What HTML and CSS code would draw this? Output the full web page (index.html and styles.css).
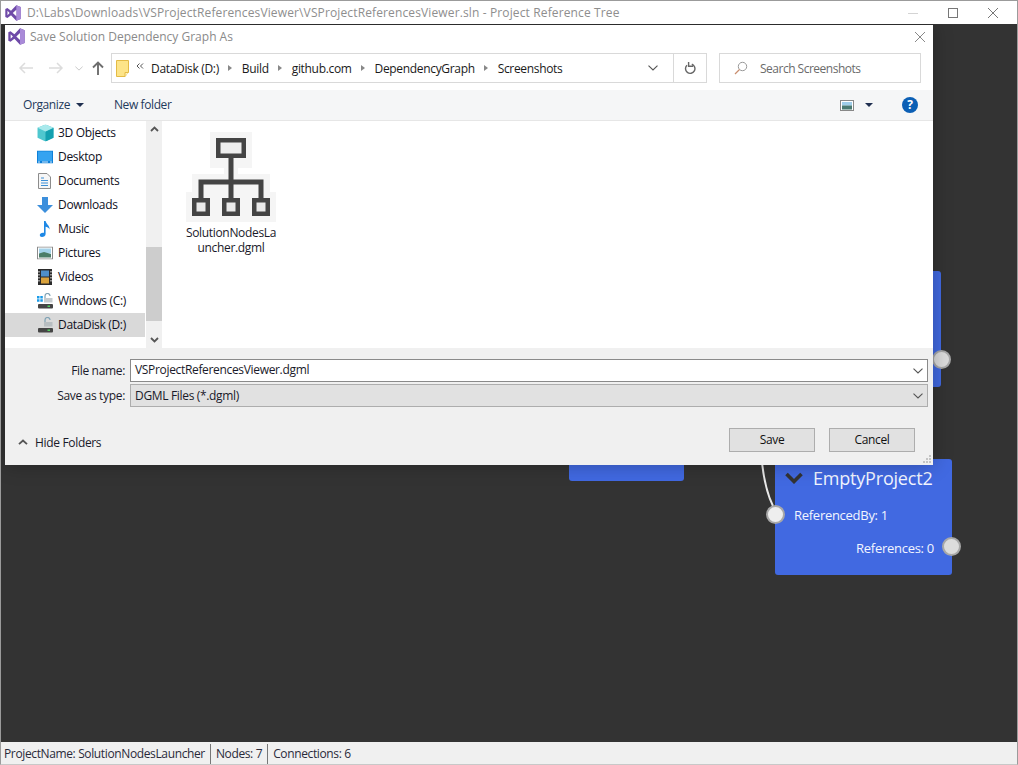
FILE: index.html
```html
<!DOCTYPE html>
<html lang="en">
<head>
<meta charset="utf-8">
<title>Project Reference Tree</title>
<link rel="stylesheet" href="styles.css">
</head>
<body>
<svg class="defs" width="0" height="0" aria-hidden="true">
  <defs>
    <symbol id="vs" viewBox="0 0 16 16">
      <path d="M11.3 0.3 L15.7 2 V14 L11.3 15.7 L6 10.2 L2.4 13 L0.3 11.9 V4.1 L2.4 3 L6 5.8 Z" fill="#6f4aa8"/>
      <path d="M11.3 0.3 L15.7 2 V14 L11.3 15.7 Z" fill="#a98ad8"/>
      <path d="M11.3 4.8 L7.8 8 L11.3 11.2 Z M2.5 5.8 V10.2 L4.6 8 Z" fill="#fff"/>
    </symbol>
    <symbol id="chev" viewBox="0 0 10 6">
      <path d="M0.5 0.7 L5 5 L9.5 0.7" fill="none" stroke="#555" stroke-width="1.1"/>
    </symbol>
  </defs>
</svg>
<div class="app">
  <header class="titlebar">
    <svg class="title-icon"><use href="#vs"/></svg>
    <span class="title-text">D:\Labs\Downloads\VSProjectReferencesViewer\VSProjectReferencesViewer.sln - Project Reference Tree</span>
    <div class="win-btns">
      <span class="win-btn"><svg width="10" height="10"><path d="M0 5.5H10" stroke="#d4d4d4"/></svg></span>
      <span class="win-btn"><svg width="10" height="10"><rect x=".5" y=".5" width="9" height="9" fill="none" stroke="#777"/></svg></span>
      <span class="win-btn"><svg width="10" height="10"><path d="M0 0L10 10M10 0L0 10" stroke="#777"/></svg></span>
    </div>
  </header>

  <main class="canvas">
    <svg class="wire" width="30" height="60"><path d="M1 1 C3 18 6 32 12 44" fill="none" stroke="#e8e8e8" stroke-width="2"/></svg>
    <div class="node node-a"><span class="port port-a"></span></div>
    <div class="node node-b"></div>
    <div class="node node-c">
      <div class="node-head">
        <svg class="node-chev" width="18" height="12" viewBox="0 0 18 12"><path d="M1.5 2 L9 9.5 L16.5 2" fill="none" stroke="#333" stroke-width="3.6"/></svg>
        <span class="node-title">EmptyProject2</span>
      </div>
      <div class="node-in">ReferencedBy: 1<span class="port port-in"></span></div>
      <div class="node-out">References: 0<span class="port port-out"></span></div>
    </div>

    <section class="dialog">
      <div class="dlg-title">
        <svg class="dlg-icon"><use href="#vs"/></svg>
        <span class="dlg-title-text">Save Solution Dependency Graph As</span>
        <svg class="dlg-close" width="10" height="10"><path d="M0 0L10 10M10 0L0 10" stroke="#888"/></svg>
      </div>

      <div class="nav">
        <svg class="nav-arrow" width="16" height="12" viewBox="0 0 16 12"><path d="M15 6H2M7 1L2 6L7 11" fill="none" stroke="#dcdcdc" stroke-width="1.5"/></svg>
        <svg class="nav-arrow fwd" width="16" height="12" viewBox="0 0 16 12"><path d="M1 6H14M9 1L14 6L9 11" fill="none" stroke="#dcdcdc" stroke-width="1.5"/></svg>
        <svg class="nav-small" width="8" height="5"><use href="#chev" opacity=".35"/></svg>
        <svg class="nav-up" width="12" height="14" viewBox="0 0 12 14"><path d="M6 14V2M1 6.5L6 1.5L11 6.5" fill="none" stroke="#6e6e6e" stroke-width="1.9"/></svg>
        <div class="address">
          <svg class="folder" width="13" height="17" viewBox="0 0 13 17"><path d="M.5 .5H12.5V12L9 16.5H.5Z" fill="#fde488" stroke="#e4bb45"/><path d="M9 16.5V12.5H12.5" fill="#fff3bf" stroke="#e4bb45"/></svg>
          <svg class="crumb-more" width="8" height="6" viewBox="0 0 8 6"><path d="M3.5 .5L1 3L3.5 5.5M7 .5L4.5 3L7 5.5" fill="none" stroke="#555"/></svg>
          <span class="crumb">DataDisk (D:)</span><span class="sep"></span>
          <span class="crumb">Build</span><span class="sep"></span>
          <span class="crumb">github.com</span><span class="sep"></span>
          <span class="crumb">DependencyGraph</span><span class="sep"></span>
          <span class="crumb">Screenshots</span>
          <svg class="addr-drop" width="10" height="6"><use href="#chev"/></svg>
          <span class="addr-refresh">
            <svg width="12" height="14" viewBox="0 0 12 14"><path d="M7.8 3.2A4.7 4.7 0 1 1 3 4.2M4.6 1V5.2H9" fill="none" stroke="#666" stroke-width="1.4"/></svg>
          </span>
        </div>
        <div class="search">
          <svg width="14" height="14" viewBox="0 0 14 14"><circle cx="8.5" cy="5.5" r="4.2" fill="none" stroke="#999"/><path d="M5.5 8.5L1 13" stroke="#c98e6f" stroke-width="1.2"/></svg>
          <span>Search Screenshots</span>
        </div>
      </div>

      <div class="toolbar">
        <span class="tool">Organize<i class="caret"></i></span>
        <span class="tool newf">New folder</span>
        <svg class="view-ico" width="14" height="11" viewBox="0 0 14 11"><rect x=".5" y=".5" width="13" height="10" fill="#fff" stroke="#888"/><rect x="2" y="2" width="10" height="3.5" fill="#9ecdea"/><rect x="2" y="5.5" width="10" height="4" fill="#4a7a72"/></svg>
        <i class="caret view-caret"></i>
        <span class="help">?</span>
      </div>

      <div class="panes">
        <nav class="side">
          <ul class="tree">
            <li class="tree-row">
              <svg width="17" height="17" viewBox="0 0 16 16"><path d="M8 0L15.5 3V12.5L8 16L.5 12.5V3Z" fill="#4fc7cf"/><path d="M8 6.5L15.5 3V12.5L8 16Z" fill="#13a0b0"/><path d="M8 0L15.5 3L8 6.5L.5 3Z" fill="#a9e9ec"/></svg>
              <span>3D Objects</span></li>
            <li class="tree-row">
              <svg width="16" height="13" viewBox="0 0 16 13"><rect width="16" height="13" fill="#0f80d8"/><rect x="1" y="1" width="14" height="9.5" fill="#35a3f0"/><path d="M1 11.5H3M5 11.5H11M13 11.5H15" stroke="#d6ecff"/></svg>
              <span>Desktop</span></li>
            <li class="tree-row">
              <svg class="ico-doc" width="13" height="16" viewBox="0 0 13 16"><path d="M.5 .5H9L12.5 4V15.5H.5Z" fill="#f6f6f6" stroke="#8c8c8c"/><path d="M3 5H6M3 7.5H10M3 10H10M3 12.5H10" stroke="#3d8fd6"/></svg>
              <span>Documents</span></li>
            <li class="tree-row">
              <svg width="16" height="16" viewBox="0 0 16 16"><path d="M5 0H11V8H16L8 16L0 8H5Z" fill="#3c8fdc"/></svg>
              <span>Downloads</span></li>
            <li class="tree-row">
              <svg class="ico-music" width="12" height="16" viewBox="2 0 12 16"><path d="M7 0H8.6C9 3 13 4.5 12.5 8.5C11.8 6.8 10 6 8.6 5.8V13C8.6 15 6.8 16 5 16C3.5 16 2.8 15 2.8 14C2.8 12.5 4.5 11.4 7 11.8Z" fill="#1e88e5"/></svg>
              <span>Music</span></li>
            <li class="tree-row">
              <svg width="16" height="13" viewBox="0 0 16 13"><rect x=".5" y=".5" width="15" height="12" fill="#fff" stroke="#8a8a8a"/><rect x="2" y="2" width="12" height="5" fill="#a5d3ea"/><path d="M2 7L7 5.5L14 7.5V11H2Z" fill="#4c7d68"/></svg>
              <span>Pictures</span></li>
            <li class="tree-row">
              <svg class="ico-video" width="14" height="16" viewBox="0 0 14 16"><rect width="14" height="16" fill="#2a2a2a"/><rect x="3" y="1.5" width="8" height="6" fill="#4f8fc8"/><rect x="3" y="8.5" width="8" height="6" fill="#d9a23c"/><path d="M1 2V14M13 2V14" stroke="#ddd" stroke-dasharray="1.5 1.5" stroke-width="1.2"/></svg>
              <span>Videos</span></li>
            <li class="tree-row">
              <svg width="16" height="16" viewBox="0 0 16 16"><path d="M0 3H2.5V5.5H0ZM3.3 3H5.8V5.5H3.3ZM0 6.3H2.5V8.8H0ZM3.3 6.3H5.8V8.8H3.3Z" fill="#1a9be8"/><path d="M8 5V3A2.5 2.5 0 0 1 13 3" fill="none" stroke="#7fa2b4" stroke-width="1.2"/><rect x="7" y="5" width="8.5" height="4.5" fill="#c6cccf"/><rect x="1" y="11" width="15" height="4.5" rx="1" fill="#454545"/><rect x="10.5" y="12.5" width="2.5" height="1.5" fill="#53d060"/></svg>
              <span>Windows (C:)</span></li>
            <li class="tree-row is-selected">
              <svg width="16" height="16" viewBox="0 0 16 16"><path d="M8 5V3A2.5 2.5 0 0 1 13 3" fill="none" stroke="#7fa2b4" stroke-width="1.2"/><rect x="7" y="5" width="8.5" height="4.5" fill="#b8bec1"/><rect x="1" y="11" width="15" height="4.5" rx="1" fill="#454545"/><rect x="10.5" y="12.5" width="2.5" height="1.5" fill="#53d060"/></svg>
              <span>DataDisk (D:)</span></li>
          </ul>
          <div class="scroll">
            <svg class="scroll-btn" width="9" height="6" viewBox="0 0 9 6"><path d="M1 5L4.5 1.5L8 5" fill="none" stroke="#555" stroke-width="1.8"/></svg>
            <div class="scroll-track"><div class="scroll-thumb"></div></div>
            <svg class="scroll-btn" width="9" height="6" viewBox="0 0 9 6"><path d="M1 1L4.5 4.5L8 1" fill="none" stroke="#555" stroke-width="1.8"/></svg>
          </div>
        </nav>
        <div class="files">
          <figure class="file">
            <svg class="file-ico" width="90" height="90" viewBox="0 0 90 90">
              <path d="M24 0H66V36H52V42H84V60H90V90H0V60H6V42H38V36H24Z" fill="#f5f5f5"/>
              <rect x="32.25" y="8.25" width="25.5" height="15.5" fill="#eee" stroke="#444" stroke-width="4.5"/>
              <path d="M45 26V68M15 68V50H75V68" fill="none" stroke="#444" stroke-width="5"/>
              <g fill="#e9e9e9" stroke="#444" stroke-width="4.5">
                <rect x="8.25" y="68.25" width="13.5" height="13.5"/>
                <rect x="38.25" y="68.25" width="13.5" height="13.5"/>
                <rect x="68.25" y="68.25" width="13.5" height="13.5"/>
              </g>
            </svg>
            <figcaption class="file-name">SolutionNodesLa<br>uncher.dgml</figcaption>
          </figure>
        </div>
      </div>

      <div class="form">
        <label class="field">
          <span class="field-label">File name:</span>
          <span class="input"><span class="input-text">VSProjectReferencesViewer.dgml</span><svg width="10" height="6"><use href="#chev"/></svg></span>
        </label>
        <label class="field">
          <span class="field-label">Save as type:</span>
          <span class="input is-select"><span>DGML Files (*.dgml)</span><svg width="10" height="6"><use href="#chev"/></svg></span>
        </label>
        <div class="actions">
          <span class="hide-folders">
            <svg width="10" height="6" viewBox="0 0 10 6"><path d="M1 5.2L5 1.5L9 5.2" fill="none" stroke="#555" stroke-width="1.8"/></svg>
            Hide Folders
          </span>
          <button class="btn" type="button">Save</button>
          <button class="btn" type="button">Cancel</button>
        </div>
        <svg class="grip" width="10" height="10" viewBox="0 0 10 10"><path d="M7 1h2v2H7zM4 4h2v2H4zM7 4h2v2H7zM1 7h2v2H1zM4 7h2v2H4zM7 7h2v2H7z" fill="#c4c4c4"/></svg>
      </div>
    </section>
  </main>

  <footer class="status">
    <span class="status-item">ProjectName: SolutionNodesLauncher</span>
    <span class="status-item">Nodes: 7</span>
    <span class="status-item">Connections: 6</span>
  </footer>
</div>
</body>
</html>
```

FILE: styles.css
```css
* { box-sizing: border-box; }
html, body { margin: 0; padding: 0; }
body {
  width: 1018px;
  height: 765px;
  overflow: hidden;
  font-family: "Open Sans", "Noto Sans", sans-serif;
  font-size: 12px;
  letter-spacing: -0.33px;
  color: #1a1a2a;
}
.defs { position: absolute; }

.app {
  width: 1018px;
  height: 765px;
  display: flex;
  flex-direction: column;
  border: 1px solid #9b9b9b;
  border-bottom-color: #c8c8c8;
  background: #333;
}

.titlebar {
  height: 23px;
  flex: none;
  display: flex;
  align-items: center;
  padding-left: 4px;
  background: #fff;
}
.title-icon { width: 16px; height: 16px; flex: none; }
.title-text { margin-left: 6px; color: #8e8e8e; font-size: 12px; letter-spacing: 0.13px; white-space: nowrap; }
.win-btns { margin-left: auto; margin-right: 4px; display: flex; }
.win-btn { width: 40px; height: 23px; display: flex; align-items: center; justify-content: center; }

.canvas { position: relative; flex: 1; background: #333; overflow: hidden; }

.node { position: absolute; background: #4169e1; border-radius: 3px; }
.node-a { left: 800px; top: 247px; width: 140px; height: 116px; }
.node-b { left: 568px; top: 380px; width: 115px; height: 77px; }
.node-c {
  left: 774px; top: 435px; width: 177px; height: 116px;
  color: #f2f5ff;
  display: flex;
  flex-direction: column;
  font-size: 13px;
  letter-spacing: -0.28px;
}
.node-head { display: flex; align-items: center; height: 38px; padding-left: 10px; }
.node-chev { flex: none; }
.node-title { margin-left: 10px; font-size: 18px; letter-spacing: -0.2px; }
.node-in { margin-top: 8px; padding-left: 19px; line-height: 20px; }
.node-out { margin-top: 13px; padding-right: 18px; text-align: right; line-height: 20px; }

.port {
  position: absolute;
  width: 19px; height: 19px;
  border-radius: 50%;
  background: #dcdcdc;
  border: 2px solid #a8a8a8;
}
.port-a { right: -10px; top: 79px; }
.port-in { left: -9px; top: 46px; background: #eee; }
.port-out { right: -9px; top: 78px; }
.wire { position: absolute; left: 760px; top: 438px; }

.dialog {
  position: absolute;
  left: 4px; top: 1px;
  width: 928px; height: 440px;
  display: flex;
  flex-direction: column;
  background: #fff;
  box-shadow: 0 0 18px rgba(0,0,0,.28);
}
.dlg-title { height: 21px; flex: none; display: flex; align-items: center; padding: 2px 8px 0 3px; }
.dlg-icon { width: 17px; height: 17px; flex: none; }
.dlg-title-text { margin-left: 5px; color: #8a8a8a; font-size: 12px; letter-spacing: 0; }
.dlg-close { margin-left: auto; }

.nav { height: 44px; flex: none; display: flex; align-items: center; padding: 0 12px 0 13px; }
.nav-arrow { flex: none; margin-right: 14px; }
.nav-arrow.fwd { margin-right: 11px; }
.nav-small { flex: none; margin-right: 9px; }
.nav-up { flex: none; margin-right: 7px; }
.address {
  width: 596px; height: 30px;
  flex: none;
  display: flex;
  align-items: center;
  border: 1px solid #d9d9d9;
  padding-left: 4px;
  color: #1a1a1a;
  letter-spacing: -0.33px;
}
.folder { flex: none; }
.crumb-more { flex: none; margin: -4px 7px 0 7px; }
.sep {
  width: 0; height: 0;
  margin: 0 10px 0 9px;
  border-left: 4px solid #888;
  border-top: 3px solid transparent;
  border-bottom: 3px solid transparent;
}
.addr-drop { margin-left: auto; margin-right: 15px; }
.addr-refresh {
  width: 33px; height: 28px;
  display: flex; align-items: center; justify-content: center;
  border-left: 1px solid #d9d9d9;
}
.search {
  width: 202px; height: 30px;
  margin-left: 12px;
  flex: none;
  display: flex;
  align-items: center;
  gap: 12px;
  border: 1px solid #d9d9d9;
  padding-left: 14px;
  color: #6b6b6b;
  letter-spacing: -0.5px;
}

.toolbar {
  height: 31px;
  flex: none;
  display: flex;
  align-items: center;
  background: #f5f6f7;
  border-bottom: 1px solid #e6e6e6;
  padding: 0 15px 2px 18px;
  color: #1f3a5c;
  letter-spacing: -0.4px;
}
.tool { display: flex; align-items: center; }
.caret {
  display: block;
  width: 0; height: 0;
  margin: 2px 0 0 6px;
  border-top: 4px solid #1f2f50;
  border-left: 4px solid transparent;
  border-right: 4px solid transparent;
}
.newf { margin-left: 30px; }
.view-ico { margin-left: auto; margin-top: 2px; }
.view-caret { margin-left: 11px; margin-right: 29px; }
.help {
  flex: none;
  width: 16px; height: 16px;
  margin-top: 2px;
  border-radius: 50%;
  background: #0b5fb5;
  color: #fff;
  font-size: 12px;
  font-weight: 700;
  line-height: 16px;
  text-align: center;
  letter-spacing: 0;
}

.panes { height: 227px; flex: none; display: flex; background: #fff; }
.side { width: 157px; flex: none; display: flex; border-right: 1px solid #f0f0f0; }
.tree { list-style: none; margin: 0; padding: 0; width: 140px; flex: none; }
.tree-row { height: 24px; display: flex; align-items: center; padding: 0 0 2px 32px; position: relative; color: #10101e; }
.tree-row svg { position: absolute; left: 32px; top: 50%; transform: translateY(-50%); }
.tree-row .ico-doc { left: 33px; }
.tree-row .ico-music { left: 34px; }
.tree-row .ico-video { left: 33px; }
.tree-row span { margin-left: 21px; }
.is-selected { background: #d9d9d9; }
.scroll {
  width: 16px; flex: none;
  display: flex; flex-direction: column; align-items: center;
  padding-top: 5px; padding-bottom: 5px;
  background: #f0f0f0;
  margin-left: 1px;
}
.scroll-btn { flex: none; }
.scroll-track { flex: 1; width: 100%; padding: 115px 0 16px; }
.scroll-thumb { height: 100%; background: #cdcdcd; }

.files { flex: 1; padding: 11px 0 0 24px; }
.file { margin: 0; width: 90px; display: flex; flex-direction: column; align-items: center; }
.file-ico { flex: none; }
.file-name { margin-top: 3px; text-align: center; line-height: 15px; white-space: nowrap; color: #1a1a2a; }

.form { flex: 1; position: relative; background: #f0f0f0; padding-top: 11px; display: flex; flex-direction: column; }
.field { display: flex; align-items: center; height: 23px; margin-bottom: 2px; padding-right: 5px; }
.field-label { width: 125px; text-align: right; padding-right: 5px; flex: none; }
.input {
  flex: 1; height: 23px;
  display: flex; align-items: center; justify-content: space-between;
  background: #fff;
  border: 1px solid #8a8a8a;
  padding: 0 4px 0 4px;
}
.input-text { padding-bottom: 2px; }
.is-select { background: #e1e1e1; border-color: #adadad; }
.actions { display: flex; align-items: center; margin-top: 19px; padding: 0 18px 0 13px; gap: 14px; }
.hide-folders { display: flex; align-items: center; gap: 7px; margin-right: auto; margin-top: 4px; }
.btn {
  width: 86px; height: 24px;
  background: #e1e1e1;
  border: 1px solid #adadad;
  font: inherit;
  letter-spacing: inherit;
  color: #111;
  padding: 0 0 2px;
}
.grip { position: absolute; right: 1px; bottom: 1px; }

.status {
  height: 22px;
  flex: none;
  display: flex;
  align-items: center;
  background: #f0f0f0;
  padding: 2px 0 0 3px;
  color: #2a2a3a;
  letter-spacing: -0.37px;
}
.status-item { padding-right: 5px; line-height: 20px; }
.status-item + .status-item { border-left: 1px solid #777; padding-left: 5px; }
```
